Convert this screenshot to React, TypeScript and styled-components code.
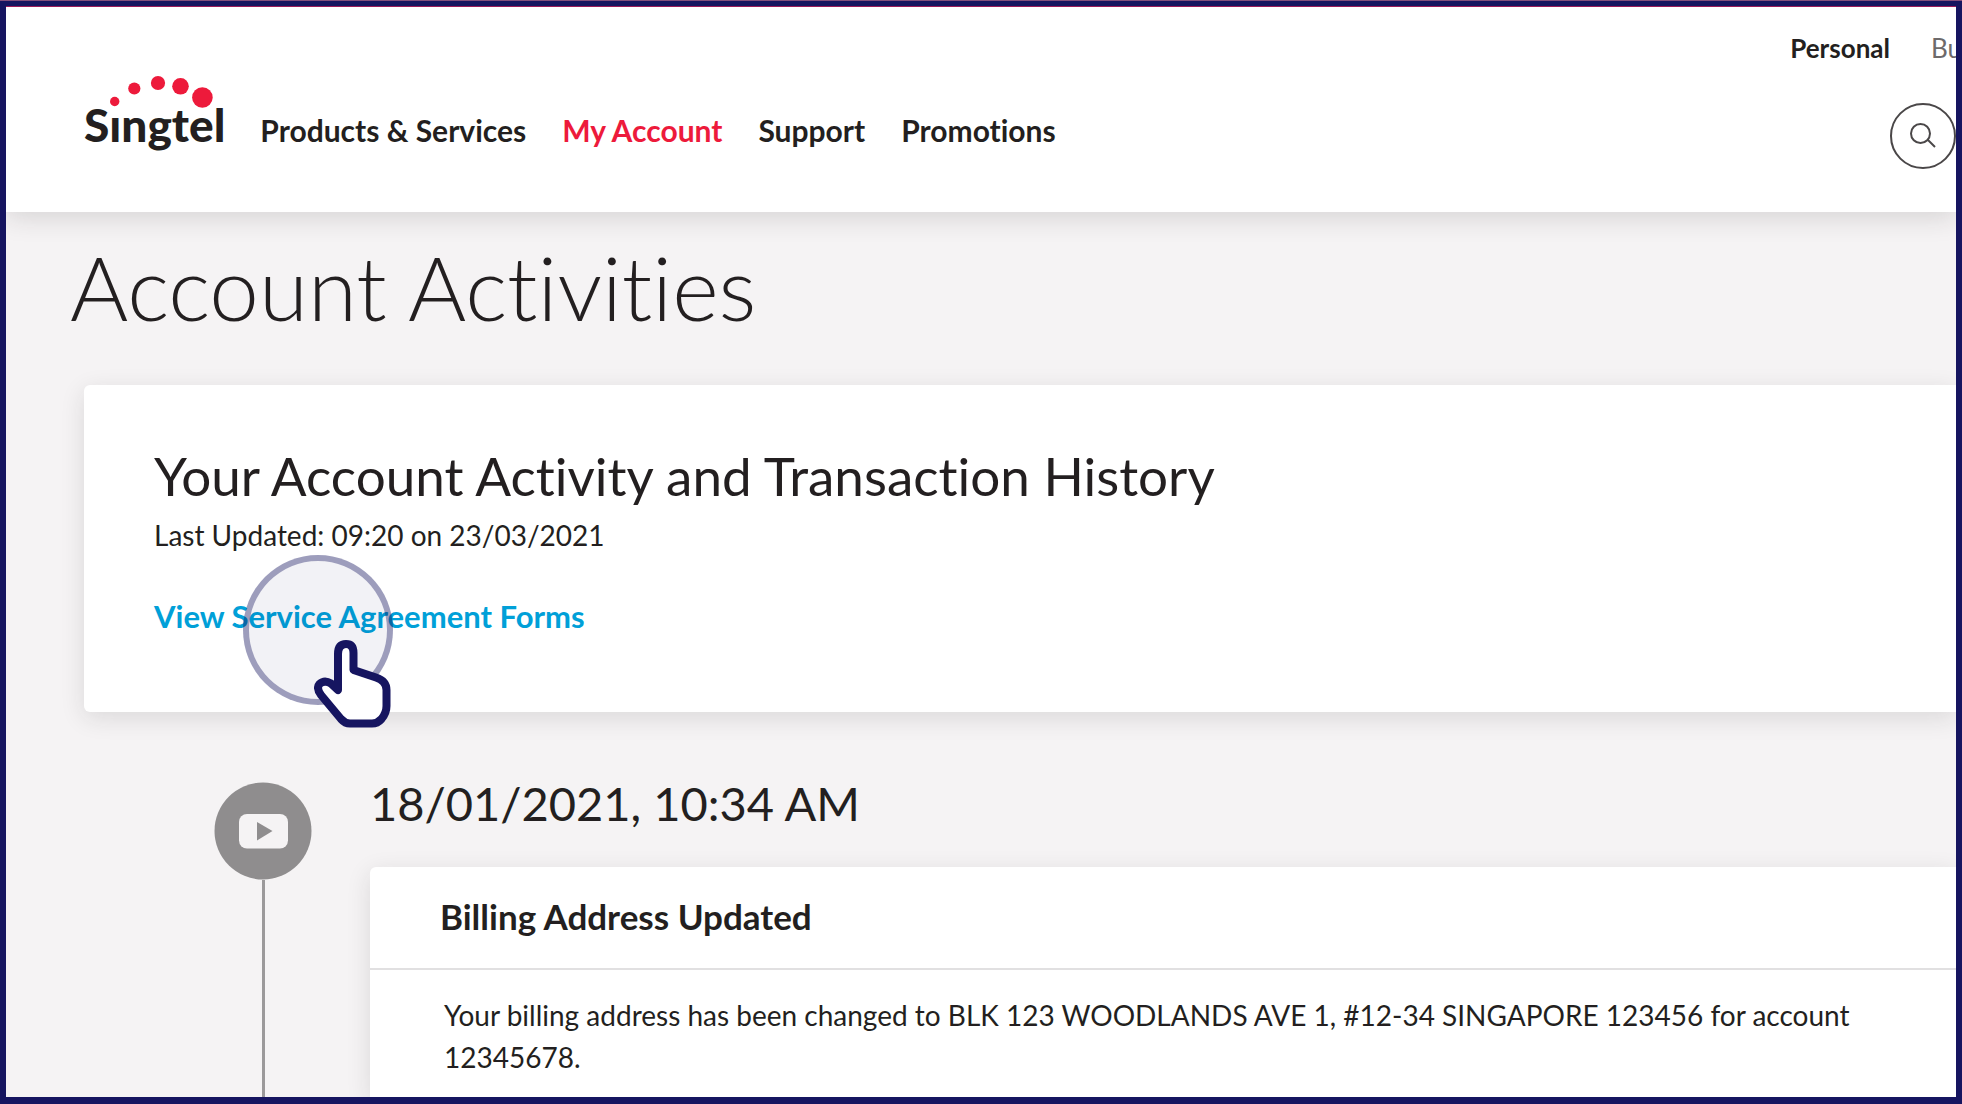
import React from 'react';
import styled, { createGlobalStyle } from 'styled-components';

const color = {
  navy: '#161560',
  ink: '#231f20',
  soft: '#6d6a6b',
  red: '#ed1a3b',
  blue: '#00a0d8',
  grey: '#8f8d8e',
  page: '#f5f3f4',
  line: '#e1e0e1',
};

const GlobalStyle = createGlobalStyle`
  *, *::before, *::after { box-sizing: border-box; }
  body {
    margin: 0;
    font-family: Lato, "Open Sans", sans-serif;
    font-variant-ligatures: none;
    color: ${color.ink};
  }
  h1, h2, h3, p, ul { margin: 0; padding: 0; }
  ul { list-style: none; }
  a { color: inherit; text-decoration: none; }
`;

const Frame = styled.div`
  display: flex;
  min-height: 100vh;
  padding: 5px 6px 7px;
  border-top: 1px solid #84507c;
  background: ${color.navy};
`;

const Screen = styled.div`
  flex: 1;
  min-width: 0;
  display: flex;
  flex-direction: column;
  overflow: hidden;
  background: ${color.page};
`;

const Header = styled.header`
  position: relative;
  display: flex;
  flex-direction: column;
  gap: 39px;
  padding: 25px 0 43px 78px;
  border-top: 1px solid #9c1a5a;
  background: #fff;
  box-shadow: 0 4px 26px rgba(35, 31, 32, 0.16);
`;

const Segments = styled.nav`
  display: flex;
  justify-content: flex-end;
  gap: 41px;
  margin-right: -6px;
`;

const Segment = styled.a<{ $current?: boolean }>`
  font-size: 26px;
  line-height: 32px;
  font-weight: ${(p) => (p.$current ? 700 : 400)};
  color: ${(p) => (p.$current ? color.ink : color.soft)};
`;

const MainRow = styled.div`
  display: flex;
  justify-content: space-between;
  align-items: flex-start;
`;

const NavGroup = styled.div`
  display: flex;
  align-items: baseline;
  gap: 35px;
`;

const Brand = styled.a`
  position: relative;
  font-size: 46px;
  line-height: 44px;
  font-weight: 900;
`;

const BrandDots = styled.svg`
  position: absolute;
  left: 26px;
  top: -28px;
  width: 104px;
  height: 34px;
`;

const NavList = styled.ul`
  display: flex;
  gap: 36px;
`;

const NavLink = styled.a<{ $active?: boolean }>`
  font-size: 30px;
  line-height: 40px;
  font-weight: 700;
  color: ${(p) => (p.$active ? color.red : color.ink)};
`;

const SearchButton = styled.button`
  display: flex;
  align-items: center;
  justify-content: center;
  width: 66px;
  height: 66px;
  padding: 0;
  border: 2px solid #4a4748;
  border-radius: 50%;
  background: #fff;
  color: #4a4748;
`;

const Content = styled.main`
  flex: 1;
  display: flex;
  flex-direction: column;
  padding-top: 22px;
`;

const PageTitle = styled.h1`
  padding-left: 64px;
  font-size: 89px;
  line-height: 106px;
  font-weight: 300;
`;

const SummaryCard = styled.section`
  position: relative;
  margin: 45px 0 0 78px;
  padding: 60px 70px 78px;
  border-radius: 6px 0 0 6px;
  background: #fff;
  box-shadow: 0 6px 24px rgba(35, 31, 32, 0.12);
`;

const CardTitle = styled.h2`
  font-size: 53px;
  line-height: 62px;
  font-weight: 400;
`;

const Updated = styled.p`
  margin-top: 10px;
  font-size: 28px;
  line-height: 36px;
`;

const FormsLink = styled.a`
  display: inline-block;
  margin-top: 45px;
  font-size: 31px;
  line-height: 36px;
  font-weight: 700;
  color: ${color.blue};
  vertical-align: top;
`;

const TapRing = styled.span`
  position: absolute;
  left: 159px;
  top: 170px;
  width: 150px;
  height: 150px;
  border: 6px solid rgba(22, 21, 96, 0.42);
  border-radius: 50%;
  background: rgba(22, 21, 96, 0.055);
  background-clip: padding-box;
  pointer-events: none;
`;

const HandPointer = styled.svg`
  position: absolute;
  left: 230px;
  top: 255px;
  width: 78px;
  height: 89px;
  pointer-events: none;
`;

const Timeline = styled.section`
  flex: 1;
  display: flex;
  gap: 58px;
  margin-top: 63px;
  padding-left: 208px;
`;

const Rail = styled.div`
  flex: none;
  display: flex;
  flex-direction: column;
  align-items: center;
  padding-top: 7px;
`;

const RailBadge = styled.svg`
  width: 98px;
  height: 98px;
`;

const RailLine = styled.span`
  flex: 1;
  width: 3px;
  background: #9b999a;
`;

const Entry = styled.article`
  flex: 1;
  min-width: 0;
  display: flex;
  flex-direction: column;
`;

const EntryDate = styled.h2`
  font-size: 47px;
  line-height: 56px;
  font-weight: 400;
`;

const EntryCard = styled.div`
  flex: 1;
  margin-top: 36px;
  border-radius: 6px 0 0 0;
  background: #fff;
  box-shadow: 0 6px 24px rgba(35, 31, 32, 0.12);
`;

const EntryTitle = styled.h3`
  padding: 28px 70px 31px;
  border-bottom: 2px solid ${color.line};
  font-size: 35px;
  line-height: 42px;
  font-weight: 700;
`;

const EntryText = styled.p`
  padding: 24px 72px 19px 74px;
  font-size: 28px;
  line-height: 42px;
`;

const navItems = [
  { label: 'Products & Services' },
  { label: 'My Account', active: true },
  { label: 'Support' },
  { label: 'Promotions' },
];

export default function App() {
  return (
    <>
      <GlobalStyle />
      <Frame>
        <Screen>
          <Header>
            <Segments aria-label="Customer type">
              <Segment href="#personal" $current>Personal</Segment>
              <Segment href="#business">Bu</Segment>
            </Segments>
            <MainRow>
              <NavGroup>
                <Brand href="#home" aria-label="Singtel">
                  Sıngtel
                  <BrandDots viewBox="0 0 104 34" fill={color.red} aria-hidden="true">
                    <circle cx="4.7" cy="26.5" r="4.7" />
                    <circle cx="24.3" cy="13.5" r="6.1" />
                    <circle cx="48" cy="8" r="7.1" />
                    <circle cx="70.5" cy="11.3" r="8.3" />
                    <circle cx="92.4" cy="22.5" r="10.3" />
                  </BrandDots>
                </Brand>
                <nav aria-label="Main">
                  <NavList>
                    {navItems.map((item) => (
                      <li key={item.label}>
                        <NavLink href="#" $active={item.active}>{item.label}</NavLink>
                      </li>
                    ))}
                  </NavList>
                </nav>
              </NavGroup>
              <SearchButton type="button" aria-label="Search">
                <svg width="28" height="28" viewBox="0 0 28 28" fill="none" stroke="currentColor" strokeWidth="2">
                  <circle cx="11.5" cy="11.5" r="9.5" />
                  <path d="M18.5 17.5 L26 25" />
                </svg>
              </SearchButton>
            </MainRow>
          </Header>

          <Content>
            <PageTitle>Account Activities</PageTitle>

            <SummaryCard>
              <CardTitle>Your Account Activity and Transaction History</CardTitle>
              <Updated>Last Updated: 09:20 on 23/03/2021</Updated>
              <FormsLink href="#forms">View Service Agreement Forms</FormsLink>
              <TapRing />
              <HandPointer viewBox="84 100 78 89" aria-hidden="true">
                <path
                  d="M108 150 V114 Q108 104 116 104 Q123.5 104 123.5 113 V130 L146 137.5 Q156.5 141 156.5 150 V166 Q156.5 173 151.5 179 Q147.5 183.5 142 183.5 H120 Q115 183.5 111 179 L91 155 Q86 148 89.5 144 Q94.5 139.5 101 143.5 Z"
                  fill="#fff"
                  stroke={color.navy}
                  strokeWidth="8"
                  strokeLinejoin="round"
                />
              </HandPointer>
            </SummaryCard>

            <Timeline>
              <Rail>
                <RailBadge viewBox="0 0 98 98" aria-hidden="true">
                  <circle cx="49" cy="49" r="48.5" fill={color.grey} />
                  <rect x="25" y="32" width="49" height="34.5" rx="8" fill={color.page} />
                  <path d="M43 40 L58.5 49 L43 58.5 Z" fill={color.grey} />
                </RailBadge>
                <RailLine />
              </Rail>
              <Entry>
                <EntryDate>18/01/2021, 10:34 AM</EntryDate>
                <EntryCard>
                  <EntryTitle>Billing Address Updated</EntryTitle>
                  <EntryText>
                    Your billing address has been changed to BLK 123 WOODLANDS AVE 1, #12-34 SINGAPORE 123456 for account 12345678.
                  </EntryText>
                </EntryCard>
              </Entry>
            </Timeline>
          </Content>
        </Screen>
      </Frame>
    </>
  );
}
